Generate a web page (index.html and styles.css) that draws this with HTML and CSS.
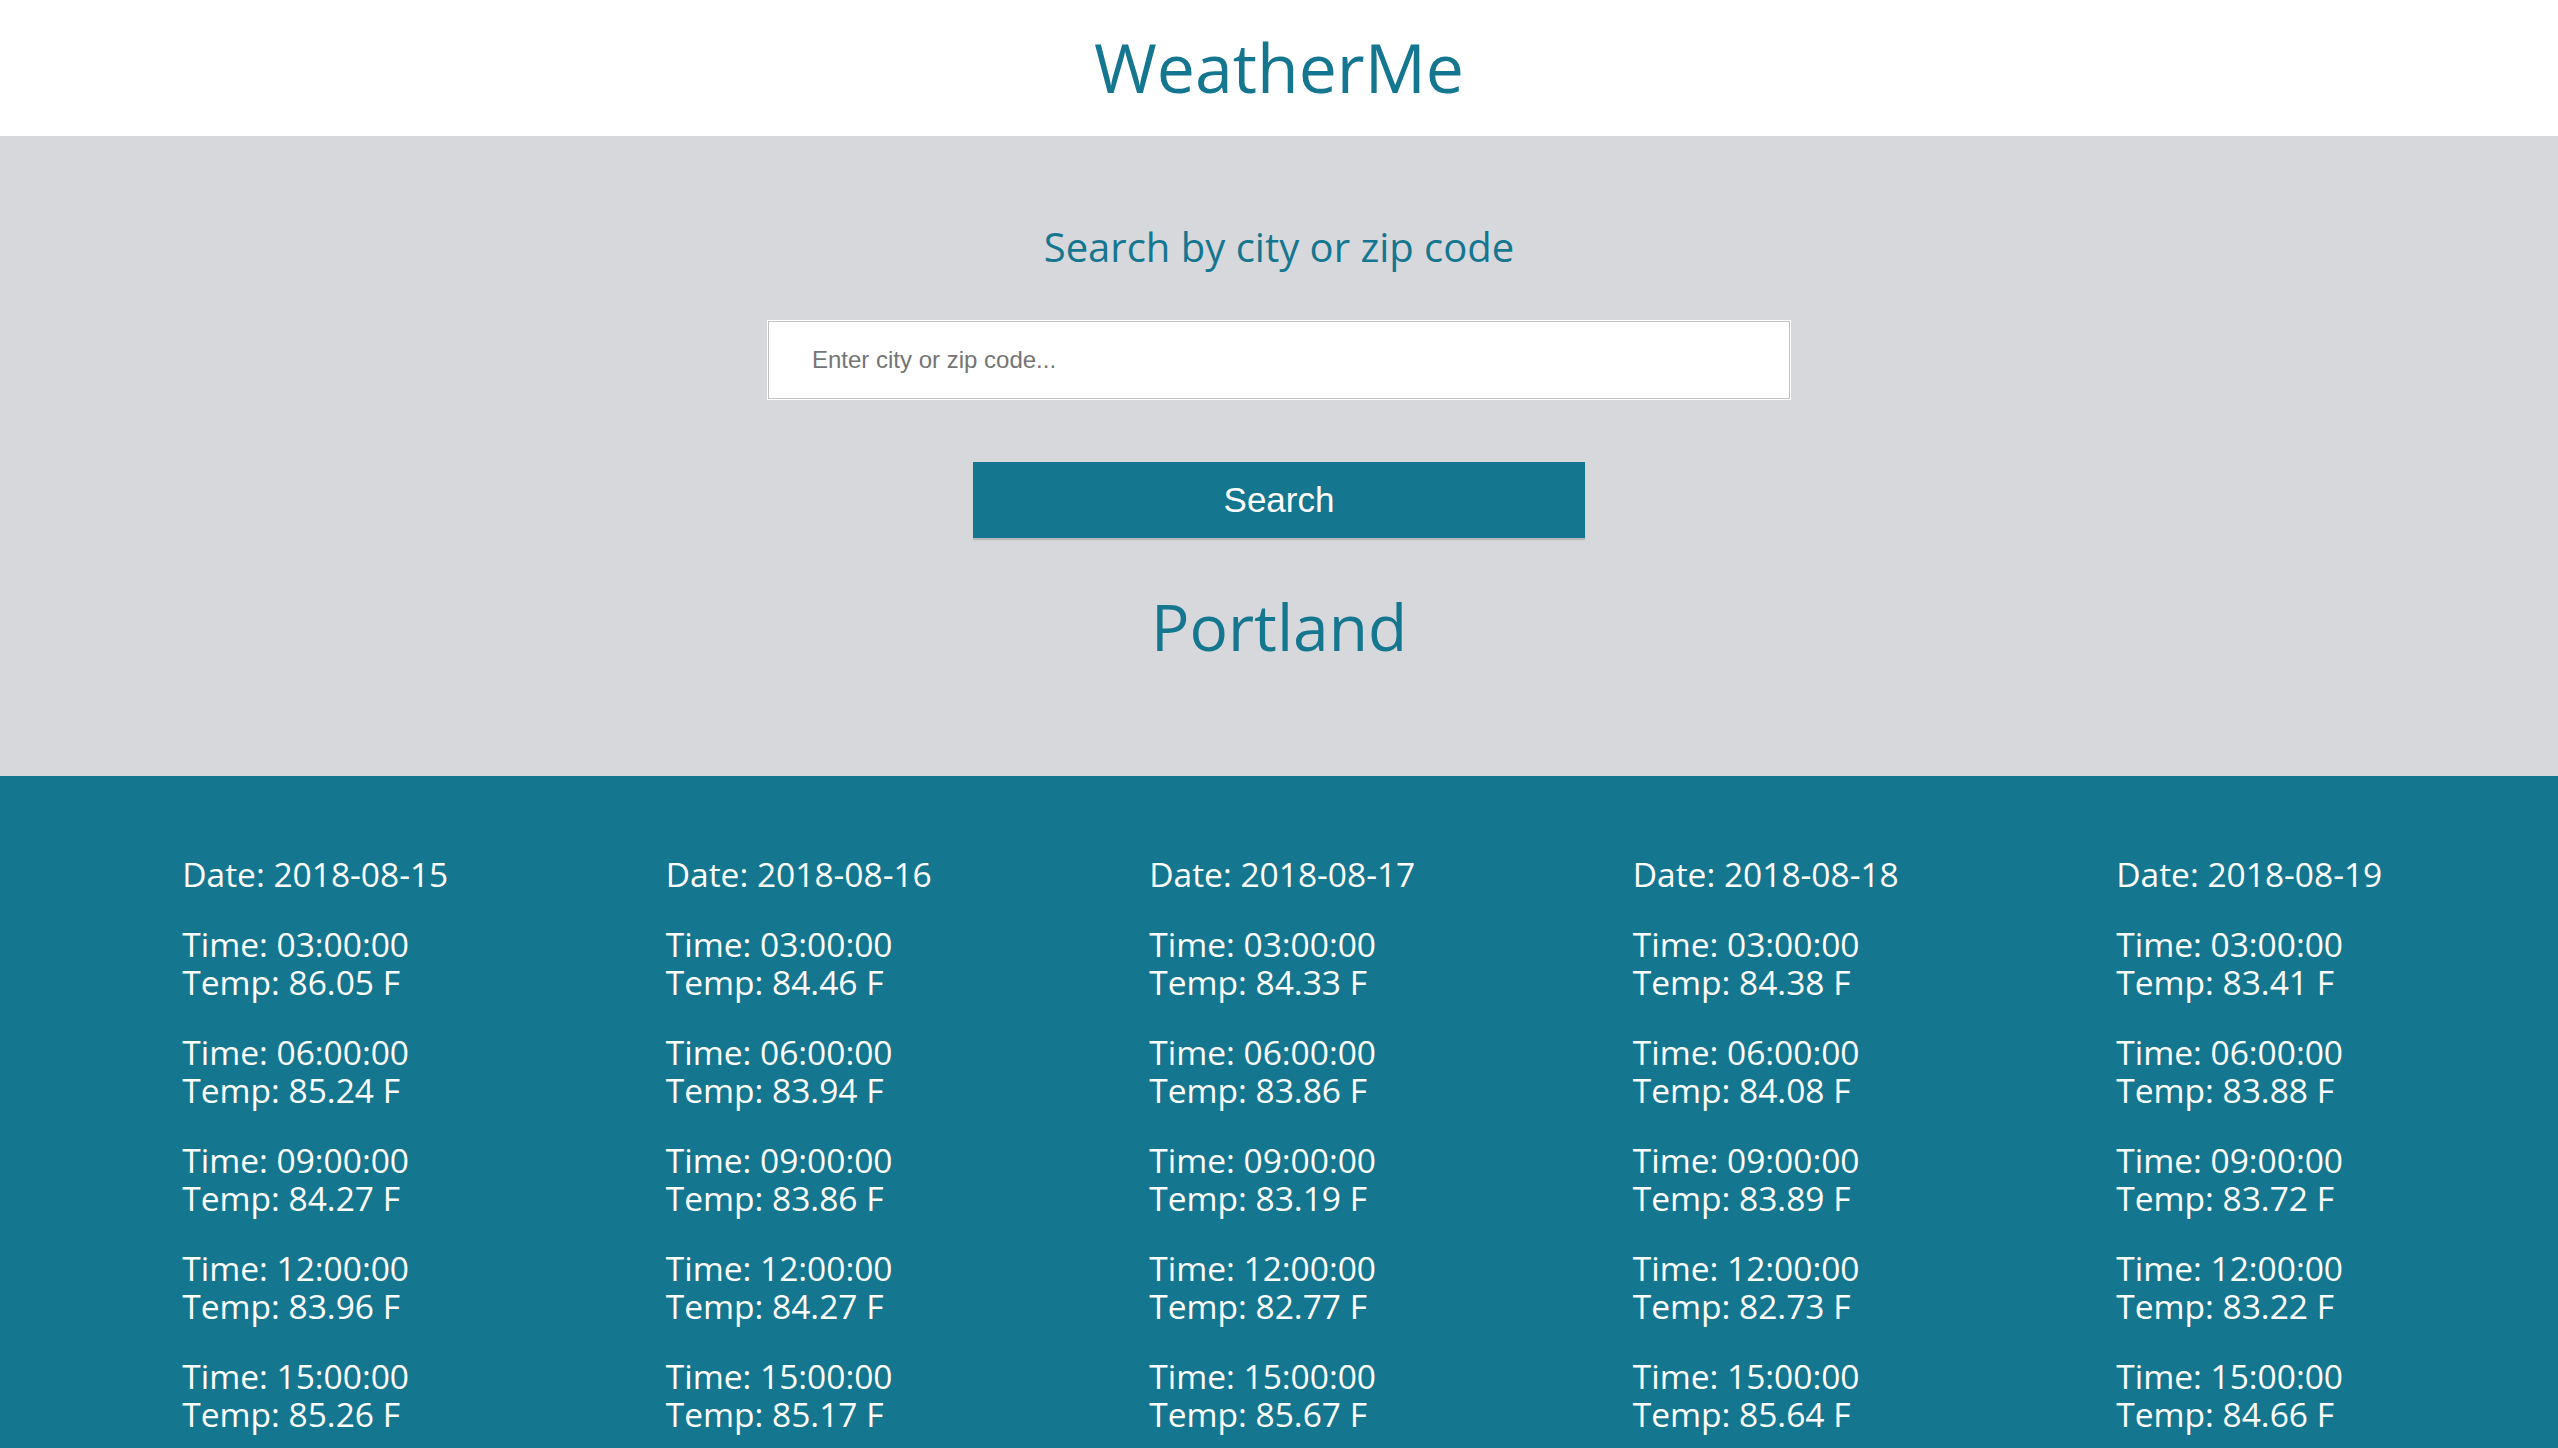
FILE: index.html
```html
<!DOCTYPE html>
<html lang="en">
<head>
<meta charset="utf-8">
<title>WeatherMe</title>
<link rel="stylesheet" href="styles.css">
</head>
<body>
<header class="site-header">
  <h1 class="brand">WeatherMe</h1>
</header>
<section class="search">
  <h2 class="search-title">Search by city or zip code</h2>
  <input class="search-input" type="text" placeholder="Enter city or zip code...">
  <button class="search-btn" type="button">Search</button>
  <h2 class="city">Portland</h2>
</section>
<section class="forecast">
  <div class="day">
    <p class="entry">Date: 2018-08-15</p>
    <p class="entry"><span class="line">Time: 03:00:00</span><span class="line">Temp: 86.05 F</span></p>
    <p class="entry"><span class="line">Time: 06:00:00</span><span class="line">Temp: 85.24 F</span></p>
    <p class="entry"><span class="line">Time: 09:00:00</span><span class="line">Temp: 84.27 F</span></p>
    <p class="entry"><span class="line">Time: 12:00:00</span><span class="line">Temp: 83.96 F</span></p>
    <p class="entry"><span class="line">Time: 15:00:00</span><span class="line">Temp: 85.26 F</span></p>
  </div>
  <div class="day">
    <p class="entry">Date: 2018-08-16</p>
    <p class="entry"><span class="line">Time: 03:00:00</span><span class="line">Temp: 84.46 F</span></p>
    <p class="entry"><span class="line">Time: 06:00:00</span><span class="line">Temp: 83.94 F</span></p>
    <p class="entry"><span class="line">Time: 09:00:00</span><span class="line">Temp: 83.86 F</span></p>
    <p class="entry"><span class="line">Time: 12:00:00</span><span class="line">Temp: 84.27 F</span></p>
    <p class="entry"><span class="line">Time: 15:00:00</span><span class="line">Temp: 85.17 F</span></p>
  </div>
  <div class="day">
    <p class="entry">Date: 2018-08-17</p>
    <p class="entry"><span class="line">Time: 03:00:00</span><span class="line">Temp: 84.33 F</span></p>
    <p class="entry"><span class="line">Time: 06:00:00</span><span class="line">Temp: 83.86 F</span></p>
    <p class="entry"><span class="line">Time: 09:00:00</span><span class="line">Temp: 83.19 F</span></p>
    <p class="entry"><span class="line">Time: 12:00:00</span><span class="line">Temp: 82.77 F</span></p>
    <p class="entry"><span class="line">Time: 15:00:00</span><span class="line">Temp: 85.67 F</span></p>
  </div>
  <div class="day">
    <p class="entry">Date: 2018-08-18</p>
    <p class="entry"><span class="line">Time: 03:00:00</span><span class="line">Temp: 84.38 F</span></p>
    <p class="entry"><span class="line">Time: 06:00:00</span><span class="line">Temp: 84.08 F</span></p>
    <p class="entry"><span class="line">Time: 09:00:00</span><span class="line">Temp: 83.89 F</span></p>
    <p class="entry"><span class="line">Time: 12:00:00</span><span class="line">Temp: 82.73 F</span></p>
    <p class="entry"><span class="line">Time: 15:00:00</span><span class="line">Temp: 85.64 F</span></p>
  </div>
  <div class="day">
    <p class="entry">Date: 2018-08-19</p>
    <p class="entry"><span class="line">Time: 03:00:00</span><span class="line">Temp: 83.41 F</span></p>
    <p class="entry"><span class="line">Time: 06:00:00</span><span class="line">Temp: 83.88 F</span></p>
    <p class="entry"><span class="line">Time: 09:00:00</span><span class="line">Temp: 83.72 F</span></p>
    <p class="entry"><span class="line">Time: 12:00:00</span><span class="line">Temp: 83.22 F</span></p>
    <p class="entry"><span class="line">Time: 15:00:00</span><span class="line">Temp: 84.66 F</span></p>
  </div>
</section>
</body>
</html>
```
FILE: styles.css
```css
html, body {
  margin: 0;
  padding: 0;
}
body {
  font-family: "Open Sans", "Noto Sans", sans-serif;
  background: #15768f;
  color: #15768f;
}
.site-header {
  background: #ffffff;
  height: 136px;
  box-sizing: border-box;
  padding-top: 3px;
  padding-bottom: 5px;
}
.brand {
  margin: 0;
  font-size: 68px;
  font-weight: 500;
  line-height: 128px;
  text-align: center;
  color: #15768f;
}
.search {
  background: #d7d8dc;
  height: 640px;
  box-sizing: border-box;
  padding-top: 81px;
  display: flex;
  flex-direction: column;
  align-items: center;
}
.search-title {
  margin: 0;
  font-size: 40px;
  font-weight: 500;
  line-height: 60px;
  color: #15768f;
}
.search-input {
  margin-top: 44px;
  width: 1022px;
  height: 78px;
  box-sizing: border-box;
  border: 1px solid #c2c2c4;
  box-shadow: 0 0 0 1px #ffffff;
  background: #ffffff;
  padding: 0 0 0 43px;
  font-family: "Liberation Sans", Arial, sans-serif;
  font-size: 24px;
  color: #333;
  outline: none;
}
.search-input::placeholder {
  color: #757575;
}
.search-btn {
  margin-top: 63px;
  width: 612px;
  height: 76px;
  border: none;
  background: #15768f;
  color: #ffffff;
  font-family: "Liberation Sans", Arial, sans-serif;
  font-size: 35px;
  box-shadow: 0 2px 1px rgba(0, 0, 0, 0.14);
  padding: 0;
  cursor: pointer;
}
.city {
  margin: 49px 0 0;
  font-size: 64px;
  font-weight: 500;
  line-height: 80px;
  color: #15768f;
}
.forecast {
  display: grid;
  grid-template-columns: repeat(5, 483.5px);
  justify-content: center;
  padding: 79px 0 40px;
  color: #ffffff;
}
.day {
  padding-left: 112px;
}
.entry {
  margin: 0 0 32px;
  font-size: 33.5px;
  font-weight: 500;
  line-height: 38px;
  white-space: nowrap;
}
.line {
  display: block;
  height: 38px;
}
```
